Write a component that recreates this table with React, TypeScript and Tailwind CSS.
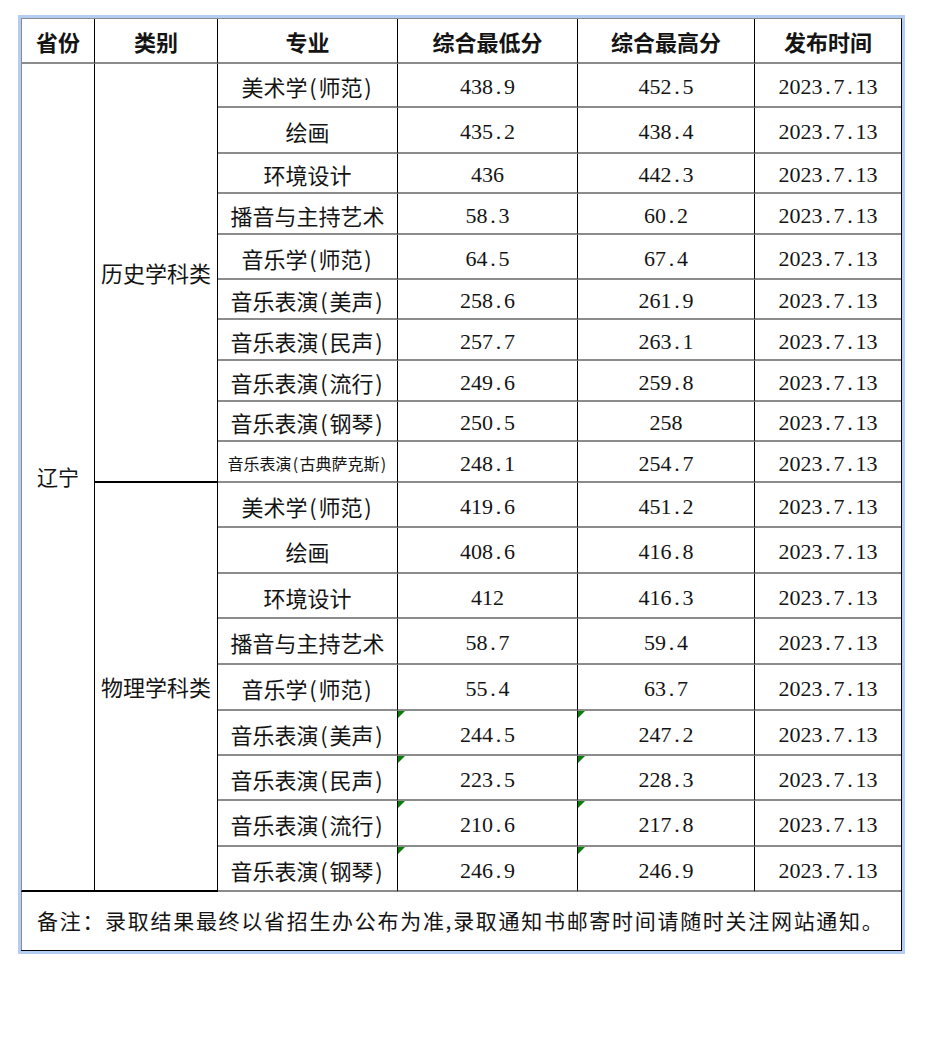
import React from "react";

type Row = {
  major: string;
  low: string;
  high: string;
  h: number;
  small?: boolean;
  mark?: boolean;
};

const history: Row[] = [
  { major: "美术学(师范)", low: "438.9", high: "452.5", h: 44 },
  { major: "绘画", low: "435.2", high: "438.4", h: 46 },
  { major: "环境设计", low: "436", high: "442.3", h: 40 },
  { major: "播音与主持艺术", low: "58.3", high: "60.2", h: 41 },
  { major: "音乐学(师范)", low: "64.5", high: "67.4", h: 45 },
  { major: "音乐表演(美声)", low: "258.6", high: "261.9", h: 40 },
  { major: "音乐表演(民声)", low: "257.7", high: "263.1", h: 41 },
  { major: "音乐表演(流行)", low: "249.6", high: "259.8", h: 41 },
  { major: "音乐表演(钢琴)", low: "250.5", high: "258", h: 40 },
  { major: "音乐表演(古典萨克斯)", low: "248.1", high: "254.7", h: 41, small: true },
];

const physics: Row[] = [
  { major: "美术学(师范)", low: "419.6", high: "451.2", h: 45 },
  { major: "绘画", low: "408.6", high: "416.8", h: 46 },
  { major: "环境设计", low: "412", high: "416.3", h: 45 },
  { major: "播音与主持艺术", low: "58.7", high: "59.4", h: 46 },
  { major: "音乐学(师范)", low: "55.4", high: "63.7", h: 46 },
  { major: "音乐表演(美声)", low: "244.5", high: "247.2", h: 45, mark: true },
  { major: "音乐表演(民声)", low: "223.5", high: "228.3", h: 45, mark: true },
  { major: "音乐表演(流行)", low: "210.6", high: "217.8", h: 46, mark: true },
  { major: "音乐表演(钢琴)", low: "246.9", high: "246.9", h: 45, mark: true },
];

const cjk = "font-['Noto_Sans_CJK_SC',sans-serif]";
const cell =
  "border-r border-r-black border-b-2 border-b-[#8c8c8c] text-center align-middle p-0";

// SimSun-like half-width digits: each char in an 11px slot
function Num({ v }: { v: string }) {
  return (
    <span className="inline-flex pt-[6px] font-['Liberation_Serif',serif] text-[22px] leading-none">
      {v.split("").map((c, i) => (
        <span key={i} className="inline-block w-[11px] text-center">
          {c}
        </span>
      ))}
    </span>
  );
}

// half-width parens like the source font
function Major({ text }: { text: string }) {
  const parts = text.split(/([()])/);
  return (
    <span className="inline-block pt-[3px]">
      {parts.map((p, i) =>
        p === "(" || p === ")" ? (
          <span key={i} className="inline-block w-[0.5em] text-center">
            {p}
          </span>
        ) : (
          <span key={i}>{p}</span>
        )
      )}
    </span>
  );
}

function Mark() {
  return (
    <svg
      className="absolute left-0 top-0"
      width="7"
      height="7"
      viewBox="0 0 7 7"
    >
      <polygon points="0,0 7,0 0,7" fill="#0a7d0a" />
    </svg>
  );
}

function DataRows({ rows, group, first }: { rows: Row[]; group: string; first: boolean }) {
  const span = rows.length;
  return (
    <>
      {rows.map((r, i) => (
        <tr key={group + i} style={{ height: r.h }}>
          {first && i === 0 && (
            <td
              rowSpan={history.length + physics.length}
              className={`${cell} border-l border-l-[#8c8c8c] border-b-black border-b text-[21px] ${cjk}`}
            >
              辽宁
            </td>
          )}
          {i === 0 && (
            <td
              rowSpan={span}
              className={`${cell} border-b border-b-black text-[22px] ${cjk}`}
            >
              {group}
            </td>
          )}
          <td
            className={`${cell} whitespace-nowrap ${
              r.small ? "text-[16px]" : "text-[22px]"
            } ${cjk}`}
          >
            <Major text={r.major} />
          </td>
          <td className={`${cell} relative`}>
            {r.mark && <Mark />}
            <Num v={r.low} />
          </td>
          <td className={`${cell} relative`}>
            {r.mark && <Mark />}
            <Num v={r.high} />
          </td>
          <td className="border-b-2 border-b-[#8c8c8c] text-center align-middle p-0">
            <Num v="2023.7.13" />
          </td>
        </tr>
      ))}
    </>
  );
}

export default function App() {
  const heads = ["省份", "类别", "专业", "综合最低分", "综合最高分", "发布时间"];
  return (
    <div className="min-h-[1042px] w-[926px] bg-white text-[#141414]">
      <div className="pt-[15px] pl-[18px]">
        <div className="w-[887px] border-[3px] border-[#b3cdf3]">
          <table className="w-[880px] table-fixed border-separate border-spacing-0 border-t border-t-[#8c8c8c] border-r border-r-black border-b border-b-black">
            <colgroup>
              <col className="w-[74px]" />
              <col className="w-[123px]" />
              <col className="w-[180px]" />
              <col className="w-[180px]" />
              <col className="w-[177px]" />
              <col className="w-[146px]" />
            </colgroup>
            <thead>
              <tr className="h-[45px]">
                {heads.map((h, i) => (
                  <th
                    key={h}
                    className={`${
                      i < 5 ? "border-r border-r-black" : ""
                    } ${i === 0 ? "border-l border-l-[#8c8c8c]" : ""} border-b-2 border-b-[#8c8c8c] text-center align-middle p-0 pt-[2px] text-[22px] font-bold ${cjk}`}
                  >
                    {h}
                  </th>
                ))}
              </tr>
            </thead>
            <tbody>
              <DataRows rows={history} group="历史学科类" first={true} />
              <DataRows rows={physics} group="物理学科类" first={false} />
              <tr className="h-[58px]">
                <td
                  colSpan={6}
                  className={`border-l border-l-[#8c8c8c] pl-[15px] text-left align-middle text-[21px] tracking-[1.7px] ${cjk}`}
                >
                  备注：录取结果最终以省招生办公布为准,录取通知书邮寄时间请随时关注网站通知。
                </td>
              </tr>
            </tbody>
          </table>
        </div>
      </div>
    </div>
  );
}
